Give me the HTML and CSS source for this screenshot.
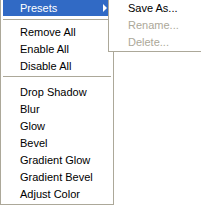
FILE: index.html
```html
<!DOCTYPE html>
<html lang="en">
<head>
    <meta charset="UTF-8">
    <meta name="viewport" content="width=device-width, initial-scale=1.0">
    <title>Filters menu</title>
    <link rel="stylesheet" href="styles.css">
</head>
<body>
    <div class="menu">
        <div class="item active">Presets<span class="arrow"></span></div>
        <div class="sep sep-top"></div>
        <div class="item">Remove All</div>
        <div class="item">Enable All</div>
        <div class="item">Disable All</div>
        <div class="sep"></div>
        <div class="item">Drop Shadow</div>
        <div class="item">Blur</div>
        <div class="item">Glow</div>
        <div class="item">Bevel</div>
        <div class="item">Gradient Glow</div>
        <div class="item">Gradient Bevel</div>
        <div class="item">Adjust Color</div>
    </div>
    <div class="submenu">
        <div class="item">Save As...</div>
        <div class="item disabled">Rename...</div>
        <div class="item disabled">Delete...</div>
    </div>
</body>
</html>
```

FILE: styles.css
```css
body {
    margin: 0;
    background: #fff;
    font: 11px "Liberation Sans", Arial, sans-serif;
    color: #000;
    position: relative;
    overflow: hidden;
    height: 205px;
}
.menu {
    width: 108px;
    margin-top: -4px;
    padding: 2px;
    border: 1px solid #aca899;
    background: #fff;
}
.item {
    display: flex;
    align-items: center;
    height: 17px;
    padding-left: 17px;
    white-space: nowrap;
}
.item.active {
    background: #316ac5;
    color: #fff;
}
.item.disabled {
    color: #aca899;
}
.arrow {
    margin-left: auto;
    margin-right: 4px;
    width: 0;
    height: 0;
    border-top: 4px solid transparent;
    border-bottom: 4px solid transparent;
    border-left: 4px solid #fff;
}
.sep {
    height: 9px;
    padding-top: 2px;
    box-sizing: border-box;
}
.sep::before {
    content: "";
    display: block;
    height: 1px;
    background: #aca899;
}
.sep-top {
    height: 7px;
    padding-top: 3px;
}
.submenu {
    position: absolute;
    left: 108px;
    top: -4px;
    width: 92px;
    padding: 2px 2px 1px;
    border: 1px solid #aca899;
    border-right: 0;
    background: #fff;
}
```
